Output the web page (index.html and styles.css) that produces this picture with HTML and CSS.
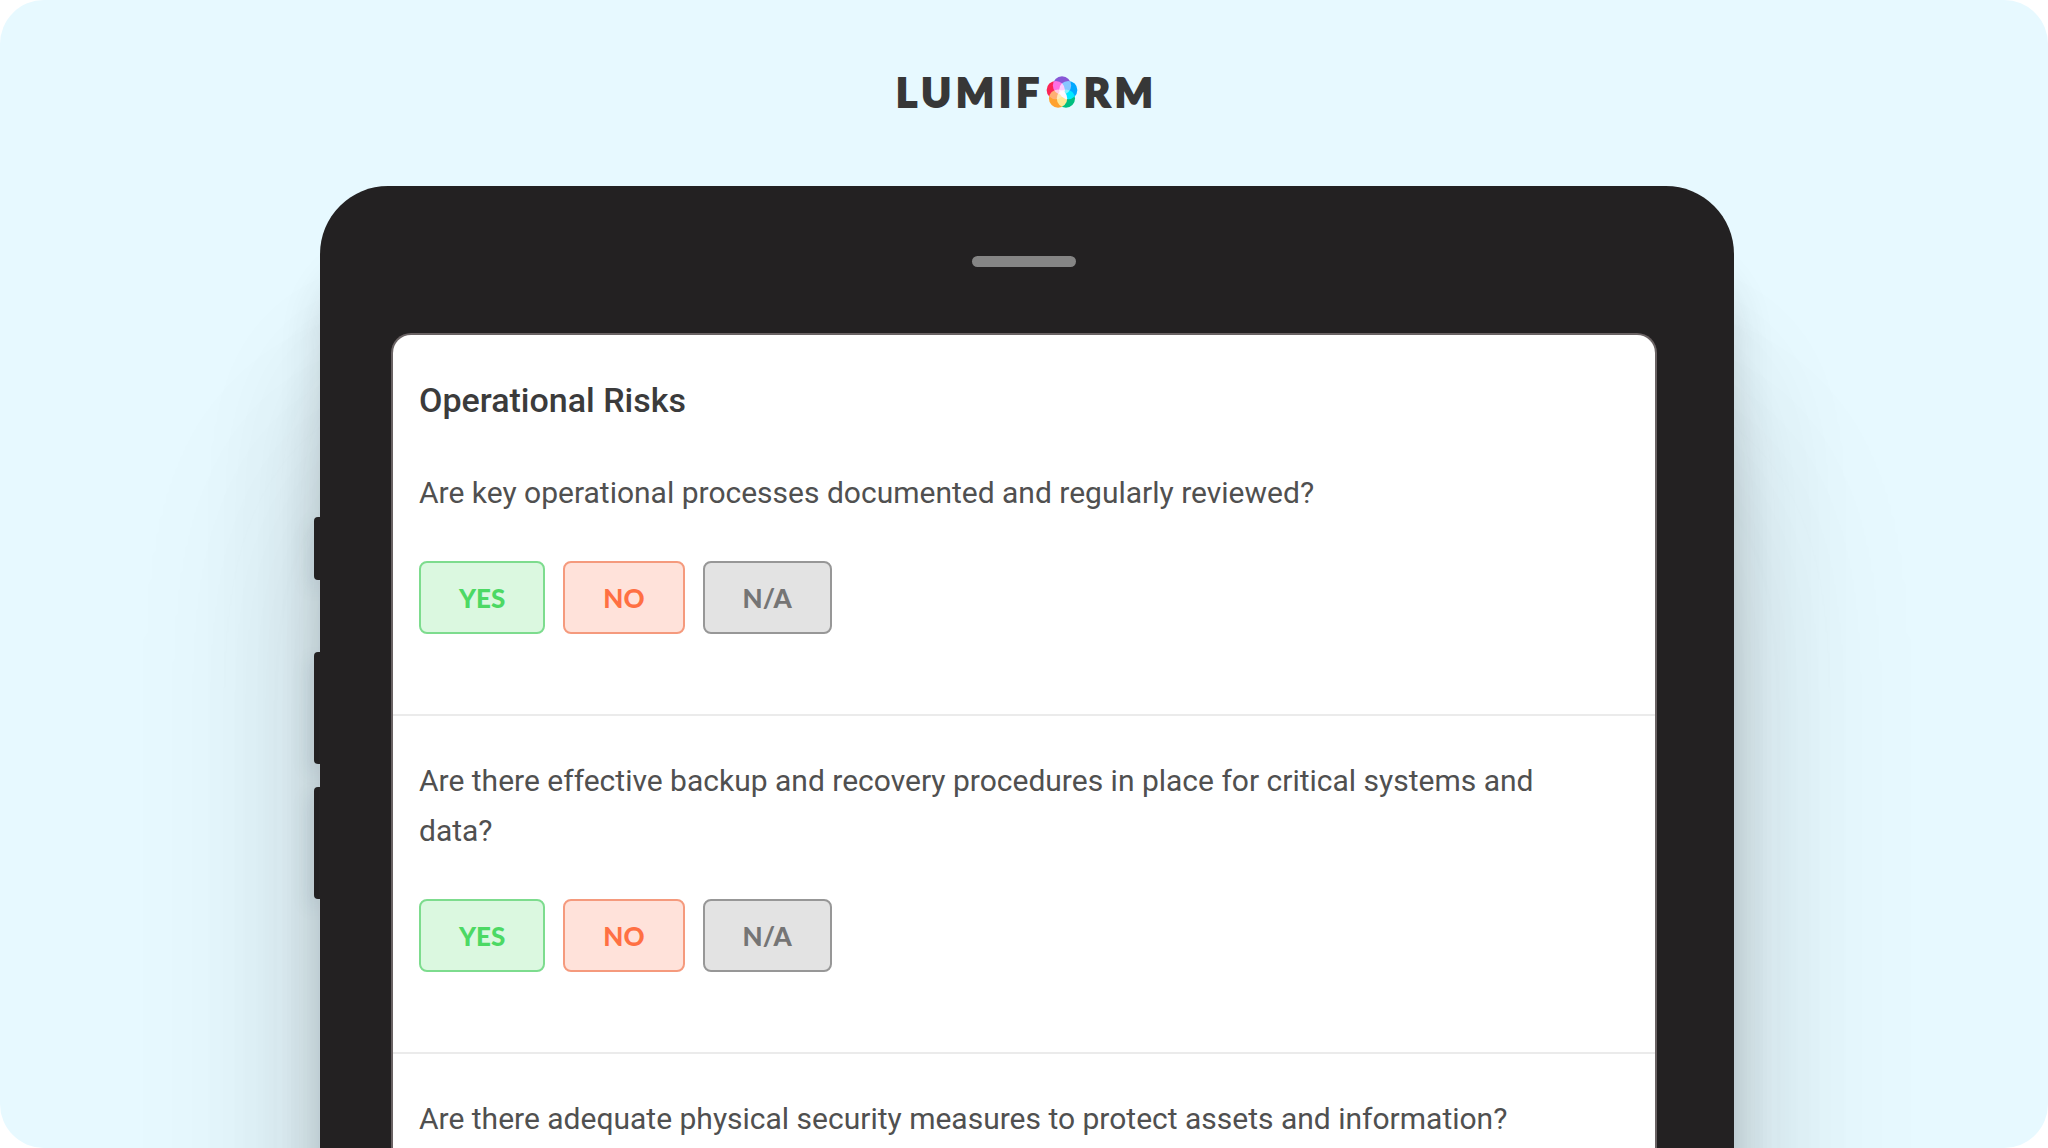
FILE: index.html
```html
<!DOCTYPE html>
<html lang="en">
<head>
    <meta charset="UTF-8">
    <meta name="viewport" content="width=device-width, initial-scale=1.0">
    <title>Lumiform - Operational Risks</title>
    <link rel="stylesheet" href="styles.css">
</head>
<body>
    <div class="stage">
        <header class="logo" aria-label="Lumiform">
            <span>LUMIF</span>
            <svg class="logo-mark" viewBox="0 0 96 98" aria-hidden="true">
                <circle cx="48" cy="29" r="28" fill="#8757d6"/>
                <circle cx="67" cy="43" r="28" fill="#00a8ff"/>
                <circle cx="60" cy="69" r="28" fill="#00bf80"/>
                <circle cx="36" cy="69" r="28" fill="#ffa22e"/>
                <circle cx="29" cy="43" r="28" fill="#fb2456"/>
            </svg>
            <span>RM</span>
        </header>

        <div class="tablet">
            <div class="side-keys">
                <span class="key key-short"></span>
                <span class="key"></span>
                <span class="key"></span>
            </div>
            <div class="tablet-body">
                <div class="speaker"></div>
                <main class="screen">
                    <h1>Operational Risks</h1>

                    <section class="question">
                        <p id="q1">Are key operational processes documented and regularly reviewed?</p>
                        <div class="answers" role="group" aria-labelledby="q1">
                            <button type="button" class="yes">YES</button>
                            <button type="button" class="no">NO</button>
                            <button type="button" class="na">N/A</button>
                        </div>
                    </section>

                    <section class="question">
                        <p id="q2">Are there effective backup and recovery procedures in place for critical systems and data?</p>
                        <div class="answers" role="group" aria-labelledby="q2">
                            <button type="button" class="yes">YES</button>
                            <button type="button" class="no">NO</button>
                            <button type="button" class="na">N/A</button>
                        </div>
                    </section>

                    <section class="question">
                        <p>Are there adequate physical security measures to protect assets and information?</p>
                    </section>
                </main>
            </div>
        </div>
    </div>
</body>
</html>
```
FILE: styles.css
```css
* {
    box-sizing: border-box;
}
body {
    margin: 0;
    background-color: #fff;
    color: #505050;
    font-family: Roboto, sans-serif;
}
.stage {
    display: flex;
    flex-direction: column;
    align-items: center;
    height: 100vh;
    padding-top: 64px;
    overflow: hidden;
    background-color: #e7f9ff;
    border-radius: 44px;
}

/* logo */
.logo {
    display: flex;
    align-items: center;
    flex-shrink: 0;
    height: 56px;
    padding-left: 6px;
    color: #373737;
    font-family: Lato, sans-serif;
    font-size: 40px;
    font-weight: 900;
    letter-spacing: 5px;
    -webkit-text-stroke: 2px #373737;
}
.logo-mark {
    width: 32px;
    height: 32px;
    margin: 0 6px 0 2px;
    isolation: isolate;
}
.logo-mark circle {
    mix-blend-mode: screen;
    stroke: none;
}

/* tablet */
.tablet {
    display: flex;
    flex: 1 0 auto;
    width: 100%;
    max-width: 1420px;
    margin-top: 66px;
}
.side-keys {
    display: flex;
    flex-direction: column;
    gap: 23px;
    width: 6px;
    padding-top: 331px;
}
.key {
    height: 112px;
    background-color: #232122;
    border-radius: 4px 0 0 4px;
    box-shadow: -2px 8px 20px rgba(60, 80, 90, 0.2);
}
.key-short {
    height: 63px;
    margin-bottom: 49px;
}
.tablet-body {
    flex: 1;
    display: flex;
    flex-direction: column;
    padding: 70px 77px 0 71px;
    background-color: #232122;
    border-radius: 68px 68px 0 0;
    box-shadow: 0 80px 40px rgba(50, 50, 50, 0.16),
                0 180px 120px rgba(50, 50, 50, 0.16),
                0 280px 200px rgba(50, 50, 50, 0.12);
}
.speaker {
    align-self: center;
    width: 104px;
    height: 11px;
    background-color: #858585;
    border-radius: 6px;
}
.screen {
    flex: 1;
    margin-top: 66px;
    background-color: #fff;
    border: 2px solid #696263;
    border-bottom: 0;
    border-radius: 20px 20px 0 0;
}
h1 {
    margin: 0;
    padding: 40px 26px 3px;
    color: #3b3b3b;
    font-size: 34px;
    font-weight: 500;
    line-height: 50px;
}

/* questions */
.question {
    padding: 40px 26px 80px;
}
.question + .question {
    border-top: 2px solid #ebebeb;
}
.question:last-child {
    padding-bottom: 40px;
}
.question p {
    max-width: 1160px;
    margin: 0;
    font-size: 30px;
    line-height: 50px;
}
.answers {
    display: flex;
    gap: 18px;
    margin-top: 43px;
}
.answers button {
    height: 73px;
    padding: 0 38px;
    border: 2px solid;
    border-radius: 8px;
    font-family: Lato, sans-serif;
    font-size: 26px;
    font-weight: 900;
    cursor: pointer;
}
.answers .yes {
    background-color: #dbf8e0;
    border-color: #7ddc8e;
    color: #4cd964;
}
.answers .no {
    background-color: #ffe2da;
    border-color: #f59a7d;
    color: #ff7043;
}
.answers .na {
    background-color: #e3e3e3;
    border-color: #979797;
    color: #757575;
}
```
